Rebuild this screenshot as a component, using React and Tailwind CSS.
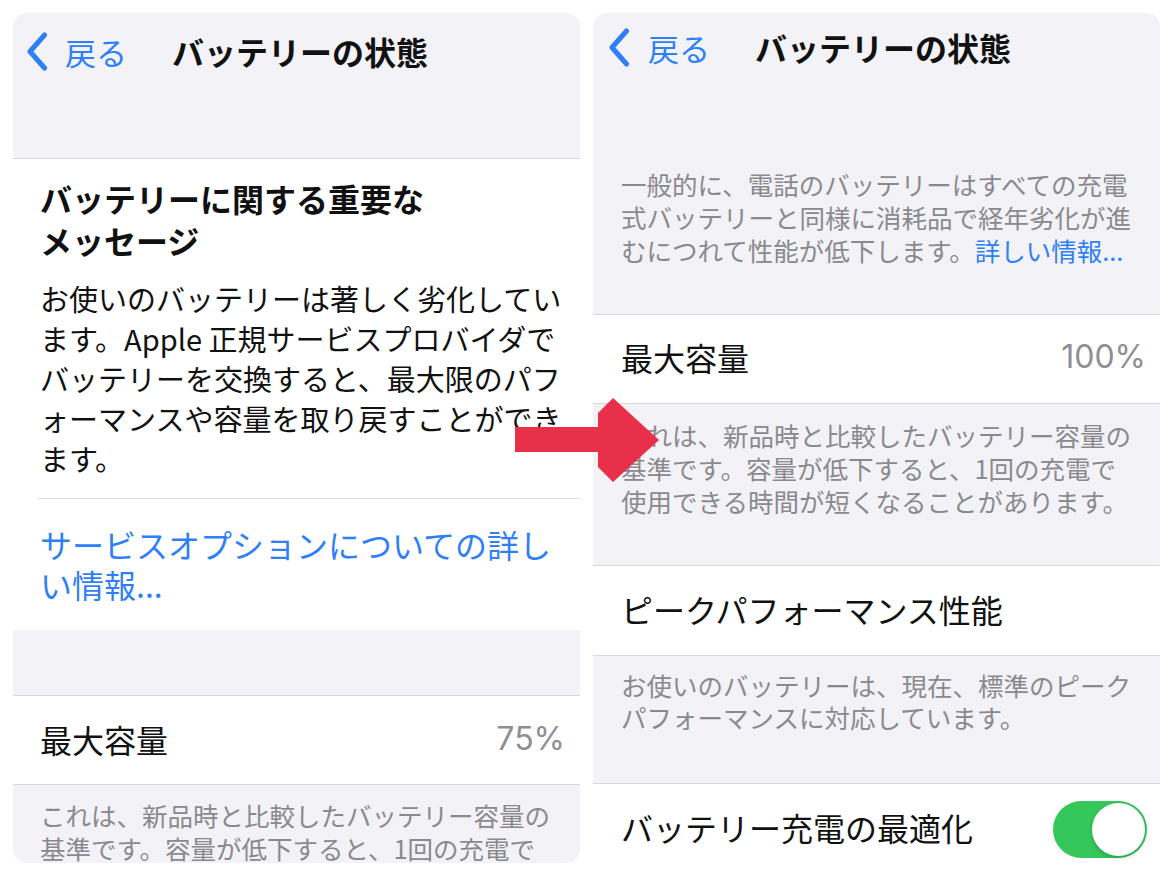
import React from "react";

const JP = '"Noto Sans CJK JP", "Noto Sans", sans-serif';
const NUM = 'Inter, "Noto Sans CJK JP", sans-serif';

function Chevron() {
  return (
    <svg width="22" height="39" viewBox="0 0 22 39" fill="none" className="shrink-0">
      <path
        d="M18.5 3 L4 19.5 L18.5 36"
        stroke="#2f7ff6"
        strokeWidth="5"
        strokeLinecap="round"
        strokeLinejoin="round"
      />
    </svg>
  );
}

function Toggle() {
  return (
    <div className="w-[94px] h-[57px] rounded-full bg-[#34c759] flex items-center justify-end p-[2px] shrink-0">
      <div className="w-[53px] h-[53px] rounded-full bg-white shadow-[0_2px_4px_rgba(0,0,0,0.18)]" />
    </div>
  );
}

function Arrow() {
  return (
    <svg
      className="absolute left-[510px] top-[392px] pointer-events-none"
      width="156"
      height="96"
      viewBox="510 392 156 96"
    >
      <polygon
        points="515,427 598,427 598,413 613,398 659,440 613,482 598,467 598,452 515,452"
        fill="#e8304a"
      />
    </svg>
  );
}

function LeftPanel() {
  return (
    <div className="w-[567px] h-[850px] rounded-[14px] overflow-hidden bg-[#f2f2f7] flex flex-col shrink-0">
      <div className="h-[76px] flex items-center pl-[13px] shrink-0">
        <Chevron />
        <span className="ml-[17px] text-[31px] leading-none text-[#2f7ff6]">戻る</span>
        <span className="ml-[45px] text-[32px] leading-none font-bold text-[#111]">バッテリーの状態</span>
      </div>
      <div className="h-[70px] shrink-0 border-b border-[#d8d8dc]" />

      <div className="bg-white pt-[18px] pb-[26px] shrink-0">
        <div className="pl-[27px] text-[32px] leading-[42px] font-bold text-[#111] whitespace-nowrap">
          <div>バッテリーに関する重要な</div>
          <div>メッセージ</div>
        </div>
        <div className="pl-[27px] mt-[17px] text-[29px] leading-[40px] text-[#111] whitespace-nowrap">
          <div>お使いのバッテリーは著しく劣化してい</div>
          <div>ます。Apple 正規サービスプロバイダで</div>
          <div>バッテリーを交換すると、最大限のパフ</div>
          <div>ォーマンスや容量を取り戻すことができ</div>
          <div>ます。</div>
        </div>
        <div className="ml-[25px] mt-[20px] h-px bg-[#dcdce0]" />
        <div className="pl-[27px] mt-[25px] text-[32px] leading-[40px] text-[#2f7ff6] whitespace-nowrap">
          <div>サービスオプションについての詳し</div>
          <div>い情報...</div>
        </div>
      </div>

      <div className="h-[66px] shrink-0 border-b border-[#d8d8dc]" />
      <div className="h-[89px] shrink-0 bg-white border-b border-[#d8d8dc] flex items-center justify-between pl-[27px] pr-[15px] pb-[3px]">
        <span className="text-[32px] leading-none text-[#111]">最大容量</span>
        <span className="text-[32px] leading-none text-[#8e8e93]" style={{ fontFamily: NUM }}>75%</span>
      </div>
      <div className="pt-[13px] pl-[27px] text-[25.5px] leading-[33px] text-[#8a8a8e] whitespace-nowrap">
        <div>これは、新品時と比較したバッテリー容量の</div>
        <div>基準です。容量が低下すると、1回の充電で</div>
      </div>
    </div>
  );
}

function RightPanel() {
  return (
    <div className="w-[567px] h-[850px] rounded-[14px] overflow-hidden bg-[#f2f2f7] flex flex-col shrink-0">
      <div className="h-[68px] flex items-center pl-[15px] shrink-0">
        <Chevron />
        <span className="ml-[18px] text-[31px] leading-none text-[#2f7ff6]">戻る</span>
        <span className="ml-[45px] text-[32px] leading-none font-bold text-[#111]">バッテリーの状態</span>
      </div>
      <div className="pt-[86px] pb-[48px] pl-[28px] text-[25.5px] leading-[33px] text-[#8a8a8e] whitespace-nowrap border-b border-[#d8d8dc] shrink-0">
        <div>一般的に、電話のバッテリーはすべての充電</div>
        <div>式バッテリーと同様に消耗品で経年劣化が進</div>
        <div>
          むにつれて性能が低下します。<span className="text-[#2f7ff6]">詳しい情報...</span>
        </div>
      </div>
      <div className="h-[89px] shrink-0 bg-white border-b border-[#d8d8dc] flex items-center justify-between pl-[28px] pr-[14px] pb-[4px]">
        <span className="text-[32px] leading-none text-[#111]">最大容量</span>
        <span className="text-[32px] leading-none text-[#8e8e93]" style={{ fontFamily: NUM }}>100%</span>
      </div>
      <div className="pt-[14px] pb-[48px] pl-[28px] text-[25.5px] leading-[33px] text-[#8a8a8e] whitespace-nowrap border-b border-[#d8d8dc] shrink-0">
        <div>これは、新品時と比較したバッテリー容量の</div>
        <div>基準です。容量が低下すると、1回の充電で</div>
        <div>使用できる時間が短くなることがあります。</div>
      </div>
      <div className="h-[90px] shrink-0 bg-white border-b border-[#d8d8dc] flex items-center pl-[28px] pb-[4px]">
        <span className="text-[32px] leading-none text-[#111]">ピークパフォーマンス性能</span>
      </div>
      <div className="pt-[13px] pb-[50px] pl-[28px] text-[25.5px] leading-[32px] text-[#8a8a8e] whitespace-nowrap border-b border-[#d8d8dc] shrink-0">
        <div>お使いのバッテリーは、現在、標準のピーク</div>
        <div>パフォーマンスに対応しています。</div>
      </div>
      <div className="h-[90px] shrink-0 bg-white flex items-center justify-between pl-[28px] pr-[13px]">
        <span className="text-[32px] leading-none text-[#111] mb-[4px]">バッテリー充電の最適化</span>
        <Toggle />
      </div>
      <div className="flex-1 bg-white" />
    </div>
  );
}

export default function App() {
  return (
    <div
      className="relative w-[1174px] h-[880px] bg-white p-[13px] flex gap-[13px] overflow-hidden"
      style={{ fontFamily: JP }}
    >
      <LeftPanel />
      <RightPanel />
      <Arrow />
    </div>
  );
}
